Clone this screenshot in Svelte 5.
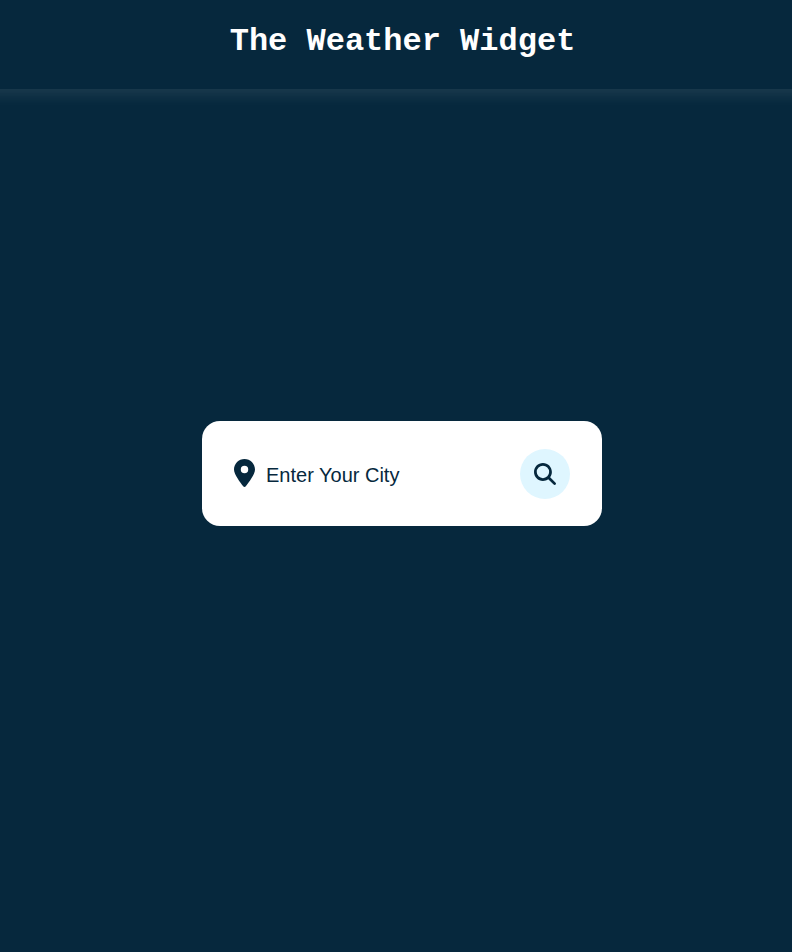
<script>
  let city = $state('');
</script>

<div class="page">
  <header><h1>The Weather Widget</h1></header>
  <main>
    <form class="card" onsubmit={(e) => e.preventDefault()}>
      <svg class="pin" viewBox="0 0 384 512" aria-hidden="true"><path d="M215.700 499.200C267 435 384 279.400 384 192C384 86 298 0 192 0S0 86 0 192c0 87.400 117 243 168.300 307.200c12.300 15.300 35.100 15.300 47.400 0zM192 124a68 68 0 1 1 0 136 68 68 0 1 1 0-136z" /></svg>
      <input type="text" placeholder="Enter Your City" aria-label="City" bind:value={city} />
      <button aria-label="Search">
        <svg viewBox="0 0 512 512" aria-hidden="true"><path d="M416 208c0 45.900-14.900 88.300-40 122.700L502.600 457.400c12.500 12.500 12.500 32.800 0 45.300s-32.800 12.500-45.300 0L330.700 376c-34.400 25.200-76.800 40-122.700 40C93.100 416 0 322.900 0 208S93.100 0 208 0S416 93.100 416 208zM208 352a144 144 0 1 0 0-288 144 144 0 1 0 0 288z" /></svg>
      </button>
    </form>
  </main>
</div>

<style>
  :global(body) { background: #06283d; }
  .page { height: 952px; display: flex; flex-direction: column; overflow: hidden; background: #06283d; }
  header {
    box-sizing: border-box;
    height: 89px;
    flex: none;
    margin: 0 -30px;
    padding: 23px 0 0 13px;
    text-align: center;
    box-shadow: 0 5px 15px rgba(255, 255, 255, 0.1);
  }
  h1 { margin: 0; color: #fff; font: bold 32px/38px "Courier New", "Liberation Mono", monospace; }
  main { display: flex; justify-content: center; padding: 332px 0 0 12px; }
  .card {
    box-sizing: border-box;
    width: 400px;
    height: 105px;
    padding: 0 32px;
    display: flex;
    align-items: center;
    background: #fff;
    border-radius: 18px;
  }
  svg { fill: #06283d; }
  .pin { width: 21px; height: 28px; flex: none; margin-bottom: 1px; }
  input {
    flex: 1;
    min-width: 0;
    height: 40px;
    margin: 3px 0 0 11px;
    padding: 0;
    border: 0;
    outline: 0;
    background: transparent;
    color: #06283d;
    font: 20px "Liberation Sans", Arial, sans-serif;
  }
  input::placeholder { color: #06283d; opacity: 1; }
  button {
    width: 50px;
    height: 50px;
    flex: none;
    padding: 0;
    display: flex;
    align-items: center;
    justify-content: center;
    border: 0;
    border-radius: 50%;
    background: #dff6ff;
  }
  button svg { width: 22px; height: 22px; }
</style>
